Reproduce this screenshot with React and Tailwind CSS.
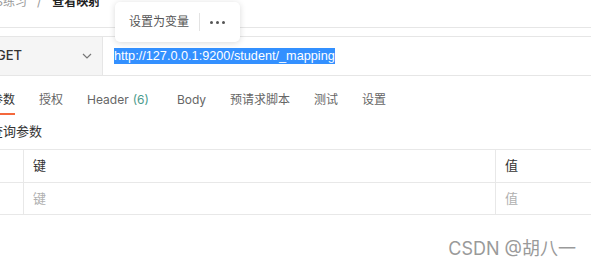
import React from 'react';

const tabs = [
  { label: '参数', active: true },
  { label: '授权' },
  { label: 'Header', count: '(6)' },
  { label: 'Body' },
  { label: '预请求脚本' },
  { label: '测试' },
  { label: '设置' },
];

const App = () => {
  return (
    <div
      className="relative w-[591px] h-[271px] overflow-hidden bg-white text-[#333]"
      style={{ fontFamily: 'Inter, "Noto Sans CJK SC", sans-serif' }}
    >
      {/* breadcrumb */}
      <div className="flex flex-col h-[28px] border-b border-[#e6e6e6]">
        <div className="flex items-center -mt-[8px] -ml-[12px] text-[12px] leading-[20px]">
          <span className="text-[#999]">ES练习</span>
          <span className="ml-[10px] text-[#999]">/</span>
          <span className="ml-[11px] font-semibold text-[#222]">查看映射</span>
        </div>
      </div>

      {/* request bar */}
      <div className="mt-[8px] flex h-[40px] border-y border-[#e6e6e6]">
        <div className="flex w-[107px] shrink-0 items-center justify-between bg-[#f5f5f5] border-r border-[#e6e6e6] pr-[10px] -ml-[4px]">
          <span className="text-[13px] font-medium text-[#333]">GET</span>
          <svg width="10" height="6" viewBox="0 0 10 6" fill="none" stroke="#777" strokeWidth="1.2">
            <path d="M1 1l4 4 4-4" />
          </svg>
        </div>
        <div className="flex flex-1 items-center pl-[11px]">
          <span
            className="bg-[#3390ff] text-white text-[12.7px] leading-[16px]"
            style={{ fontFamily: '"Liberation Sans", Arial, sans-serif' }}
          >
            http://127.0.0.1:9200/student/_mapping
          </span>
        </div>
      </div>

      {/* tabs */}
      <div className="mt-[15px] flex h-[24px] -ml-[9px] text-[12px]">
        {tabs.map((t) => (
          <div
            key={t.label}
            className={`relative flex items-start ${t.label === 'Header' ? 'mr-[28px]' : 'mr-[24px]'}`}
          >
            <span className={t.active ? 'text-[#333]' : 'text-[#666]'}>
              {t.label}
              {t.count && <span className="ml-[4px] text-[#4a9a8c]">{t.count}</span>}
            </span>
            {t.active && (
              <div className="absolute left-0 right-0 bottom-0 h-[2px] bg-[#f4683c]" />
            )}
          </div>
        ))}
      </div>

      <div className="mt-[7px] -ml-[10px] text-[13px] leading-[18px] text-[#333]">查询参数</div>

      {/* table */}
      <div className="mt-[9px] border-y border-[#e8e8e8] text-[13px]">
        <div className="flex h-[33px] border-b border-[#e8e8e8]">
          <div className="w-[24px] border-r border-[#e8e8e8]" />
          <div className="flex flex-1 items-center pl-[9px] text-[#333]">键</div>
          <div className="flex w-[96px] items-center border-l border-[#e8e8e8] pl-[9px] text-[#333]">值</div>
        </div>
        <div className="flex h-[31px]">
          <div className="w-[24px] border-r border-[#e8e8e8]" />
          <div className="flex flex-1 items-center pl-[9px] text-[#b0b0b0]">键</div>
          <div className="flex w-[96px] items-center border-l border-[#e8e8e8] pl-[9px] text-[#b0b0b0]">值</div>
        </div>
      </div>

      {/* watermark */}
      <div className="mt-[20px] pr-[15px] text-right text-[18px] text-[#9a9a9a]">CSDN @胡八一</div>

      {/* popup */}
      <div className="absolute left-[115px] top-[2px] flex h-[40px] w-[125px] items-center rounded-[5px] bg-white pl-[14px] shadow-[0_1px_6px_rgba(0,0,0,0.15)]">
        <span className="text-[12px] text-[#555]">设置为变量</span>
        <div className="mx-[10px] h-[18px] w-px bg-[#e3e3e3]" />
        <span className="flex gap-[3px]">
          <span className="h-[3px] w-[3px] rounded-full bg-[#555]" />
          <span className="h-[3px] w-[3px] rounded-full bg-[#555]" />
          <span className="h-[3px] w-[3px] rounded-full bg-[#555]" />
        </span>
      </div>
    </div>
  );
};

export default App;
